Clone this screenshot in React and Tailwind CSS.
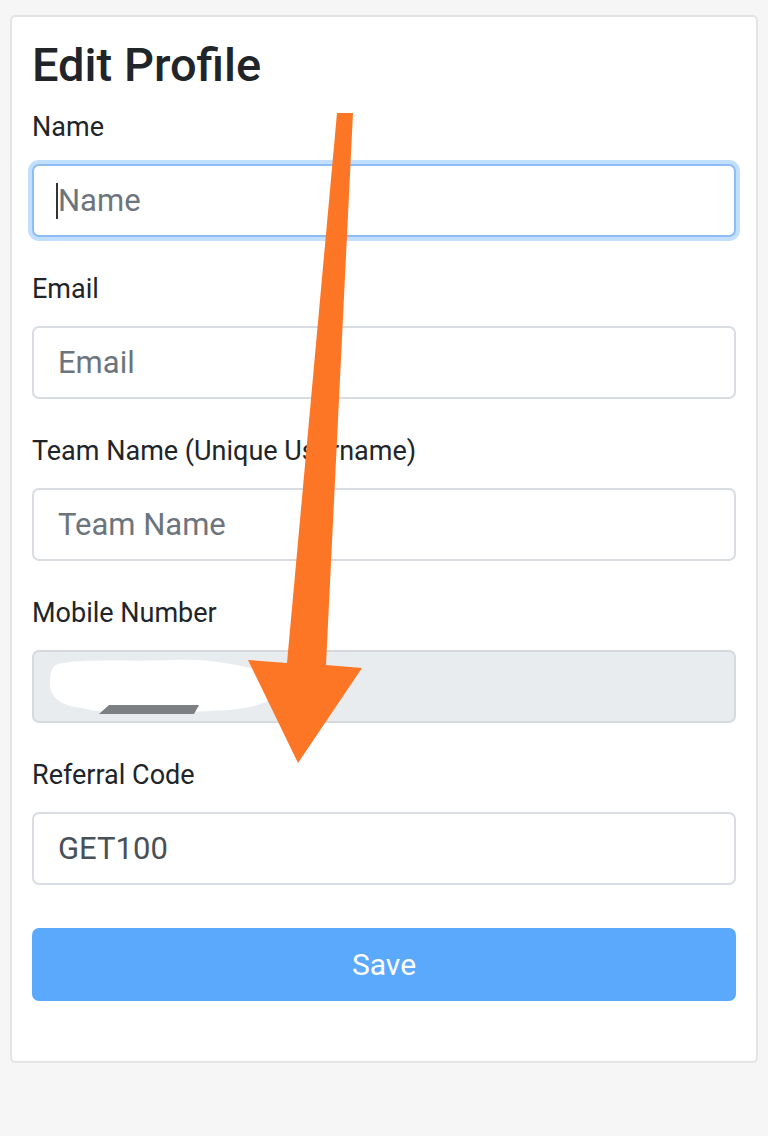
import React from 'react';

const fields = [
  { label: 'Name', placeholder: 'Name', focused: true },
  { label: 'Email', placeholder: 'Email' },
  { label: 'Team Name (Unique Username)', placeholder: 'Team Name' },
  { label: 'Mobile Number', placeholder: '', disabled: true },
  { label: 'Referral Code', placeholder: 'Referral Code', value: 'GET100' },
];

function Field({ label, placeholder, focused, disabled, value }) {
  return (
    <div className="mb-[34px]">
      <label className="block text-[27px] leading-[36px] text-[#212529] mb-[19px]">{label}</label>
      <div className="relative">
        <input
          readOnly
          defaultValue={value}
          placeholder={placeholder}
          className={
            'block w-full h-[73px] rounded-[7px] border-2 pl-[24px] pr-4 text-[31px] text-[#495057] placeholder:text-[#6c757d] outline-none ' +
            (focused
              ? 'border-[#8dbdf4] shadow-[0_0_0_4px_#c3dfff] bg-white'
              : disabled
              ? 'border-[#d6dadf] bg-[#e9ecef]'
              : 'border-[#d9dde1] bg-white')
          }
        />
        {focused && <span className="absolute left-[24px] top-[19px] w-[2px] h-[36px] bg-[#333]" />}
        {disabled && (
          <svg className="absolute left-[10px] top-[4px]" width="240" height="62" viewBox="0 0 240 62">
            <path
              d="M16 10 C40 4 90 8 130 6 C170 4 200 12 226 18 C236 24 232 40 224 48 C200 58 170 56 150 58 C110 60 60 60 40 54 C20 52 8 44 8 30 C8 18 10 12 16 10 Z"
              fill="#ffffff"
            />
            <path d="M57 60 L67 51 L157 51 L152 60 Z" fill="#7c7f83" />
          </svg>
        )}
      </div>
    </div>
  );
}

export default function App() {
  return (
    <div className="relative min-h-screen bg-[#f6f6f6] pt-[15px] px-[10px] font-['Roboto',sans-serif]">
      <div className="bg-white border-2 border-[#e4e4e4] rounded-[5px] px-[20px] pt-[20px] pb-[60px]">
        <h2 className="text-[47px] leading-[55px] font-medium text-[#212529] mb-[17px]">Edit Profile</h2>
        {fields.map(f => (
          <Field key={f.label} {...f} />
        ))}
        <button className="block w-full h-[73px] mt-[43px] rounded-[7px] bg-[#5aa9fd] text-white text-[30px]">
          Save
        </button>
      </div>

      {/* annotation arrow drawn over the screenshot */}
      <svg className="absolute inset-0 pointer-events-none" width="768" height="1136" viewBox="0 0 768 1136">
        <polygon
          points="337,113 353,113 326,665 362,668 298,763 248,660 287,663"
          fill="#fc7626"
        />
      </svg>
    </div>
  );
}
